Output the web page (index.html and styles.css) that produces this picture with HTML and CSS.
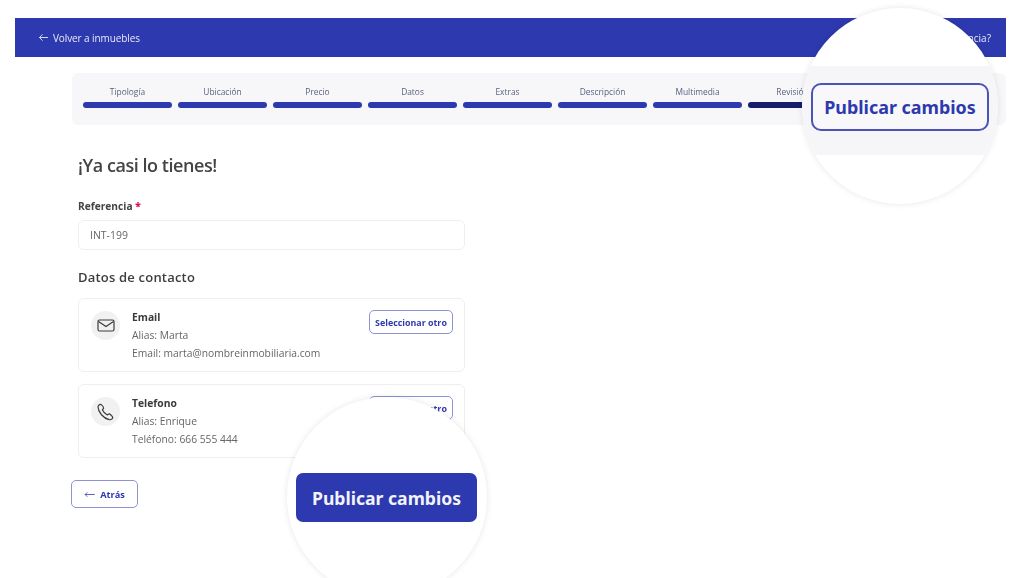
FILE: index.html
```html
<!DOCTYPE html>
<html lang="es">
<head>
<meta charset="utf-8">
<title>Publicar cambios</title>
<link rel="stylesheet" href="styles.css">
</head>
<body>
<div class="page">
  <header class="topbar">
    <a class="back-link">
      <svg class="back-icon" viewBox="0 0 12 10" fill="none"><path d="M11 5H1.500M5 1.500 1.500 5 5 8.500" stroke="currentColor" stroke-width="1"/></svg>
      Volver a inmuebles
    </a>
    <span class="help">¿Necesitas asistencia?</span>
  </header>

  <nav class="steps">
    <div class="step"><span>Tipología</span><i></i></div>
    <div class="step"><span>Ubicación</span><i></i></div>
    <div class="step"><span>Precio</span><i></i></div>
    <div class="step"><span>Datos</span><i></i></div>
    <div class="step"><span>Extras</span><i></i></div>
    <div class="step"><span>Descripción</span><i></i></div>
    <div class="step"><span>Multimedia</span><i></i></div>
    <div class="step current"><span>Revisión</span><i></i></div>
  </nav>

  <main class="content">
    <h1>¡Ya casi lo tienes!</h1>
    <label class="field-label">Referencia <b>*</b></label>
    <div class="input">INT-199</div>
    <h2>Datos de contacto</h2>

    <section class="card">
      <div class="icon-disc">
        <svg viewBox="0 0 18 13" width="18" height="13" fill="none" stroke="#3c3c3c" stroke-width="1.200"><rect x="1" y="1" width="16" height="11" rx="1.500"/><path d="M1.500 2.500 9 7.500l7.500-5"/></svg>
      </div>
      <div class="card-text">
        <strong>Email</strong>
        <span>Alias: Marta</span>
        <span>Email: marta@nombreinmobiliaria.com</span>
      </div>
      <button class="btn-outline">Seleccionar otro</button>
    </section>

    <section class="card">
      <div class="icon-disc">
        <svg viewBox="0 0 20 20" width="20" height="20" fill="none" stroke="#3c3c3c" stroke-width="1.200" stroke-linejoin="round"><path d="M3 3c.8-.9 2-.9 2.700 0l1.600 2c.5.700.4 1.500-.2 2l-.8.800c1 2.200 2.800 4 5 5.200l1-.7c.7-.5 1.500-.4 2.100.2l1.800 1.800c.7.700.7 1.800 0 2.400-.8.800-1.900 1.200-3 1C7.500 16.500 2 10 2 4.800c0-.7.400-1.200 1-1.800Z"/></svg>
      </div>
      <div class="card-text">
        <strong>Telefono</strong>
        <span>Alias: Enrique</span>
        <span>Teléfono: 666 555 444</span>
      </div>
      <button class="btn-outline">Seleccionar otro</button>
    </section>

    <button class="btn-back">
      <svg viewBox="0 0 12 8" width="11" height="7" fill="none"><path d="M12 4H1M3.500 1.500 1 4l2.500 2.500" stroke="#2d39ae" stroke-width=".9"/></svg>
      Atrás
    </button>
  </main>

  <div class="lens lens-top">
    <div class="lens-band"><button class="big-outline">Publicar cambios</button></div>
  </div>
  <div class="lens lens-bottom">
    <button class="big-solid">Publicar cambios</button>
  </div>
</div>
</body>
</html>
```

FILE: styles.css
```css
* { box-sizing: border-box; }
html, body { margin: 0; height: 100%; background: #fff; overflow: hidden; }
body { font-family: "Open Sans", "Noto Sans", sans-serif; color: #444; }
.page { position: relative; width: 1036px; height: 578px; overflow: hidden; padding-top: 18px; filter: blur(.4px); }

.topbar {
  margin: 0 30px 0 15px; height: 39px; padding: 0 15px 0 23px;
  background: #2d39ae; color: #e8eaf8; font-size: 10px;
  display: flex; align-items: center; justify-content: space-between;
}
.back-link { display: flex; align-items: center; gap: 4px; letter-spacing: -.1px; }
.back-icon { width: 11px; height: 9px; }

.steps {
  margin: 16px 30px 0 72px; height: 52px; padding: 12px 11px 0;
  background: #f7f7f9; border-radius: 6px;
  display: flex; gap: 6px;
}
.step { width: 89px; display: flex; flex-direction: column; align-items: center; gap: 4px; font-size: 8.400px; color: #5b5f80; }
.step span { line-height: 13px; }
.step i { display: block; width: 100%; height: 6px; border-radius: 3px; background: #2d39ae; }
.step.current i { background: #161d6b; }

.content { margin-left: 78px; width: 387px; }
h1 { margin: 28px 0 0; font-size: 18px; line-height: 24px; font-weight: 600; letter-spacing: -.45px; color: #444; }
.field-label { display: block; margin-top: 22px; font-size: 10.200px; line-height: 14px; font-weight: 700; color: #444; }
.field-label b { color: #d8134f; }
.input {
  margin-top: 7px; height: 30px; padding: 0 11px; display: flex; align-items: center;
  border: 1px solid #eeeef0; border-radius: 6px; font-size: 10.500px; color: #666;
}
h2 { margin: 18px 0 0; font-size: 13px; line-height: 18px; font-weight: 600; color: #3d3d3d; letter-spacing: .2px; }

.card {
  margin-top: 12px; height: 74px; padding: 12px 11px 0 12px; border: 1px solid #eeeef0; border-radius: 6px;
  display: flex; align-items: flex-start;
}
.icon-disc {
  width: 29px; height: 29px; border-radius: 50%; background: #f1f1f1; flex: none;
  display: flex; align-items: center; justify-content: center;
}
.card-text { margin-left: 12px; flex: 1; display: flex; flex-direction: column; font-size: 10.300px; line-height: 18px; color: #666; margin-top: -3px; }
.card-text strong { font-weight: 700; color: #3a3a3a; }
.btn-outline {
  font: 700 8.900px "Open Sans", sans-serif; color: #2d39ae; background: #fff;
  width: 84px; height: 24px; padding: 0; border: 1.200px solid #8e93d3; border-radius: 5px; margin-top: -1px;
}
.btn-back {
  margin: 22px 0 0 -7px; width: 67px; height: 28px; padding: 0;
  background: #fff; border: 1.200px solid #8e93d3; border-radius: 5px;
  font: 700 9.200px "Open Sans", sans-serif; color: #2d39ae;
  display: flex; align-items: center; justify-content: center; gap: 5px;
}

.lens {
  position: absolute; border-radius: 50%; background: #fff; overflow: hidden;
  box-shadow: 0 0 6px rgba(0,0,0,.1);
}
.lens-top { left: 802px; top: 8px; width: 196px; height: 196px; padding-top: 58px; }
.lens-band { height: 89px; background: #f6f6f8; display: flex; align-items: center; justify-content: center; padding-bottom: 7px; }
.big-outline {
  width: 178px; height: 48px; padding: 0; background: #f8f8fb; border: 2px solid #4a54b8; border-radius: 10px;
  font: 700 17.900px "Noto Sans", "Open Sans", sans-serif; color: #2d39ae;
}
.lens-bottom { left: 287px; top: 397px; width: 200px; height: 200px; padding: 76px 0 0 9px; }
.big-solid {
  display: block; width: 181px; height: 49px; padding: 0; background: #2d39ae; border: 0; border-radius: 7px;
  font: 700 17.600px "Noto Sans", "Open Sans", sans-serif; color: #f2f3fb;
}
```
